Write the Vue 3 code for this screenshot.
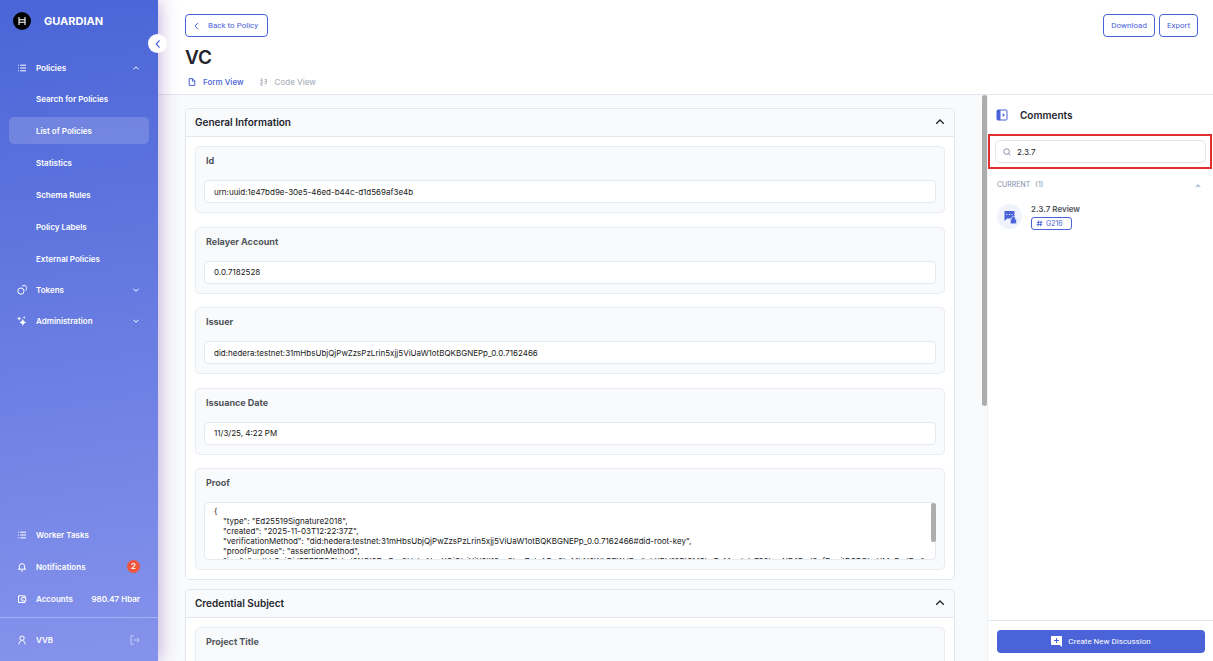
<script setup>
import { ref } from 'vue'

const policyItems = [
  'Search for Policies',
  'List of Policies',
  'Statistics',
  'Schema Rules',
  'Policy Labels',
  'External Policies',
]
const activeItem = ref('List of Policies')
const search = ref('2.3.7')

const fields = [
  { id: 'vc-id', label: 'Id', value: 'urn:uuid:1e47bd9e-30e5-46ed-b44c-d1d569af3e4b' },
  { id: 'vc-relayer', label: 'Relayer Account', value: '0.0.7182528' },
  { id: 'vc-issuer', label: 'Issuer', value: 'did:hedera:testnet:31mHbsUbjQjPwZzsPzLrin5xjj5ViUaW1otBQKBGNEPp_0.0.7162466' },
  { id: 'vc-date', label: 'Issuance Date', value: '11/3/25, 4:22 PM' },
]

const proof = `{
    "type": "Ed25519Signature2018",
    "created": "2025-11-03T12:22:37Z",
    "verificationMethod": "did:hedera:testnet:31mHbsUbjQjPwZzsPzLrin5xjj5ViUaW1otBQKBGNEPp_0.0.7162466#did-root-key",
    "proofPurpose": "assertionMethod",
    "jws": "eyJhbGciOiJFZERTQSIsImI2NCI6ZmFsc2UsImNyaXQiOlsiYjY0Il19..a2hmZnlnARw2brMbN2WkRPWdFndlgLXRkl12Pt0MSLeEvMa_Jgls782hexNF4RpJ2ofDuojtRCRQkgUMoRgJRw"
}`
</script>

<template>
  <div class="app">
    <aside class="sidebar">
      <div class="brand">
        <svg class="logo" viewBox="0 0 18 18" aria-hidden="true">
          <circle cx="9" cy="9" r="9" fill="#000" />
          <path d="M6 5v8M12 5v8M6 7.700h6M6 10.300h6" stroke="#fff" stroke-width="1.100" fill="none" />
        </svg>
        <span class="brand-name">GUARDIAN</span>
      </div>
      <button class="collapse" type="button" aria-label="Collapse menu">
        <svg viewBox="0 0 10 10"><path d="M6.300 2 3.500 5l2.800 3" /></svg>
      </button>

      <nav class="menu">
        <button class="row" type="button">
          <svg class="ico" viewBox="0 0 10 10"><path d="M3.200 2.200H9M3.200 5H9M3.200 7.800H9M1 2.200h.8M1 5h.8M1 7.800h.8" /></svg>
          <span class="grow">Policies</span>
          <svg class="chev" viewBox="0 0 8 8"><path d="M1.500 5.300 4 2.800l2.500 2.500" /></svg>
        </button>
        <ul class="submenu">
          <li v-for="item in policyItems" :key="item">
            <a href="#" class="sub" :class="{ active: item === activeItem }" @click.prevent="activeItem = item">{{ item }}</a>
          </li>
        </ul>
        <button class="row" type="button">
          <svg class="ico" viewBox="0 0 10 10"><circle cx="3.900" cy="6.100" r="3.100" /><path d="M5 1.400a2.700 2.700 0 1 1 3.400 4.100" /></svg>
          <span class="grow">Tokens</span>
          <svg class="chev" viewBox="0 0 8 8"><path d="M1.500 2.800 4 5.300l2.500-2.500" /></svg>
        </button>
        <button class="row" type="button">
          <svg class="ico solid" viewBox="0 0 10 10">
            <path d="M5.800 3 6.900 5.300 9.300 6.400 6.900 7.500 5.800 9.900 4.700 7.500 2.300 6.400 4.700 5.300Z" />
            <path d="M2.200.6 2.900 2 4.300 2.600 2.900 3.200 2.200 4.600 1.500 3.200.1 2.600 1.500 2Z" />
            <path d="M7.200.2 7.600 1.100 8.500 1.500 7.600 1.900 7.200 2.800 6.800 1.900 5.900 1.500 6.800 1.100Z" />
          </svg>
          <span class="grow">Administration</span>
          <svg class="chev" viewBox="0 0 8 8"><path d="M1.500 2.800 4 5.300l2.500-2.500" /></svg>
        </button>
      </nav>

      <div class="tools">
        <a href="#" class="row">
          <svg class="ico" viewBox="0 0 10 10"><path d="M3.200 2.200H9M3.200 5H9M3.200 7.800H9M1 2.200h.8M1 5h.8M1 7.800h.8" /></svg>
          <span class="grow">Worker Tasks</span>
        </a>
        <a href="#" class="row">
          <svg class="ico" viewBox="0 0 10 10"><path d="M2.400 7V4.200a2.600 2.600 0 0 1 5.200 0V7M1 7.200h8M4 9h2" /></svg>
          <span class="grow">Notifications</span>
          <span class="count">2</span>
        </a>
        <a href="#" class="row">
          <svg class="ico" viewBox="0 0 10 10"><path d="M8 3.200V1.800H1.500v6.700H8V7.200M8.700 3.400H6a1.800 1.800 0 0 0 0 3.600h2.700ZM6.200 4.900v.6" /></svg>
          <span class="grow">Accounts</span>
          <span>980.47 Hbar</span>
        </a>
      </div>
      <div class="user">
        <div class="row">
          <svg class="ico" viewBox="0 0 10 10"><circle cx="5" cy="3.200" r="2.200" /><path d="M1.800 9.500V8.400L3.800 5.400M8.200 9.500V8.400L6.200 5.400" /></svg>
          <span class="grow">VVB</span>
          <button class="logout" type="button" aria-label="Log out">
            <svg viewBox="0 0 10 10"><path d="M3.700.8H1v8.400h2.700M3.500 5h5.700M7 2.800 9.200 5 7 7.200" /></svg>
          </button>
        </div>
      </div>
    </aside>

    <div class="page">
      <header class="head">
        <div class="bar">
          <button class="btn back" type="button">
            <svg viewBox="0 0 8 8"><path d="M5 .8 2 4l3 3.200" /></svg>
            Back to Policy
          </button>
          <div class="actions">
            <button class="btn" type="button">Download</button>
            <button class="btn" type="button">Export</button>
          </div>
        </div>
        <h1>VC</h1>
        <div class="tabs" role="tablist">
          <button class="tab on" type="button" role="tab" aria-selected="true">
            <svg viewBox="0 0 8 8"><path d="M1.200.6h3.300l2.300 2.300v4.500H1.200ZM4.400.7v2.400h2.400" /></svg>
            Form View
          </button>
          <button class="tab" type="button" role="tab" aria-selected="false">
            <svg viewBox="0 0 8 8"><path d="M.8.600h1v1.800M.6 2.500h2.200M.6 4h1.800v1.200H.8v1.900h1.900M4.600 1.500h1.800v3.900H4.600M4.600 3.500h1.800" /></svg>
            Code View
          </button>
        </div>
      </header>

      <div class="body">
        <main class="content">
          <section class="card">
            <header class="card-head">
              <h2>General Information</h2>
              <button class="fold" type="button" aria-label="Collapse General Information">
                <svg viewBox="0 0 10 10"><path d="M1.200 6.800 5 3l3.800 3.800" /></svg>
              </button>
            </header>
            <div class="card-body general">
              <div v-for="f in fields" :key="f.id" class="field">
                <label :for="f.id">{{ f.label }}</label>
                <input :id="f.id" type="text" readonly :value="f.value" />
              </div>
              <div class="field">
                <label for="vc-proof">Proof</label>
                <div class="area">
                  <textarea id="vc-proof" readonly :value="proof"></textarea>
                  <span class="area-thumb"></span>
                </div>
              </div>
            </div>
          </section>
          <section class="card">
            <header class="card-head">
              <h2>Credential Subject</h2>
              <button class="fold" type="button" aria-label="Collapse Credential Subject">
                <svg viewBox="0 0 10 10"><path d="M1.200 6.800 5 3l3.800 3.800" /></svg>
              </button>
            </header>
            <div class="card-body">
              <div class="field">
                <label for="vc-title">Project Title</label>
                <input id="vc-title" type="text" readonly />
              </div>
            </div>
          </section>
        </main>
        <div class="track"><span class="thumb"></span></div>

        <aside class="panel">
          <div class="panel-head">
            <button class="toggle" type="button" aria-label="Hide comments">
              <svg viewBox="0 0 12 12">
                <rect x="1" y="1" width="10" height="10" rx="1" fill="#fff" stroke="#4a63d8" />
                <path d="M1 1h3.500v10H1Z" fill="#4a63d8" />
                <path d="M6.700 4v4l2.200-2Z" fill="#4a63d8" />
              </svg>
            </button>
            <h2>Comments</h2>
          </div>
          <div class="search">
            <label class="search-box">
              <svg viewBox="0 0 8 8"><circle cx="3.600" cy="3.600" r="2.800" /><path d="M5.600 5.600 7.400 7.400" /></svg>
              <input v-model="search" type="text" aria-label="Search comments" />
            </label>
          </div>
          <div class="group">
            <button class="group-head" type="button">
              <span>CURRENT</span><span class="num">(1)</span>
              <svg viewBox="0 0 6 3"><path d="M0 3 3 0l3 3Z" /></svg>
            </button>
            <a href="#" class="thread">
              <span class="avatar">
                <svg viewBox="0 0 14 14">
                  <path d="M1.500 1h10v7.500H4L1.500 11Z" fill="#4a63d8" />
                  <path d="M3.500 4.500h1M6 4.500h1M8.500 4.500h1" stroke="#fff" stroke-width="1" />
                  <path d="M8.500 9.200V8.300a1.900 1.900 0 0 1 3.800 0v.9h1.100v4.600H7.400V9.200Z" fill="#4a63d8" stroke="#f0f3fc" stroke-width=".6" />
                </svg>
              </span>
              <span class="thread-text">
                <strong>2.3.7 Review</strong>
                <span class="tag">
                  <svg viewBox="0 0 8 8"><path d="M3 .8 2.200 7.200M5.900.8 5.100 7.200M1 2.700h6.300M.7 5.200H7" /></svg>
                  G216
                </span>
              </span>
            </a>
          </div>
          <footer class="panel-foot">
            <button class="create" type="button">
              <svg viewBox="0 0 11 11">
                <path d="M0 .8A.8.8 0 0 1 .8 0h9.400a.8.8 0 0 1 .8.800V11L8.800 9H.8A.8.8 0 0 1 0 8.200Z" fill="#fff" />
                <path d="M5.500 2v5M3 4.500h5" stroke="#4a63d8" stroke-width="1" />
              </svg>
              Create New Discussion
            </button>
          </footer>
        </aside>
      </div>
    </div>
  </div>
</template>

<style>
body {
  margin: 0;
}
</style>

<style scoped>
* {
  box-sizing: border-box;
}
.app {
  display: flex;
  height: 100vh;
  overflow: hidden;
  font: 8px/12px Inter, "Liberation Sans", sans-serif;
  color: #181818;
  background: #fff;
}
button,
input,
textarea {
  font: inherit;
  color: inherit;
  margin: 0;
  padding: 0;
  border: 0;
  background: none;
}
button {
  cursor: pointer;
}
a {
  color: inherit;
  text-decoration: none;
}
svg {
  display: block;
  flex: none;
  fill: none;
  stroke: currentColor;
  stroke-width: 1;
}
h1,
h2 {
  margin: 0;
  font-weight: 600;
}

/* Sidebar */
.sidebar {
  position: relative;
  z-index: 2;
  flex: none;
  width: 158px;
  display: flex;
  flex-direction: column;
  color: #fff;
  font-weight: 600;
  background: linear-gradient(172deg, #4a65d7 0%, #8693ec 100%);
  box-shadow: 0 0 18px rgba(90, 38, 160, 0.42);
}
.brand {
  display: flex;
  align-items: center;
  gap: 13px;
  height: 42px;
  padding-left: 13px;
}
.logo {
  width: 18px;
  height: 18px;
  stroke: none;
}
.brand-name {
  font-size: 11px;
  font-weight: 700;
}
.collapse {
  position: absolute;
  top: 34px;
  right: -9px;
  width: 19px;
  height: 19px;
  display: grid;
  place-items: center;
  border-radius: 50%;
  background: #fff;
  color: #4a63d8;
}
.collapse svg {
  width: 12px;
  height: 12px;
}
.menu {
  display: flex;
  flex-direction: column;
  gap: 4px;
  padding: 12px 9px 0;
}
.row {
  display: flex;
  align-items: center;
  width: 100%;
  height: 27px;
  padding: 0 9px 0 8px;
  text-align: left;
}
.ico {
  width: 10px;
  height: 10px;
  margin-right: 9px;
}
.ico.solid {
  fill: currentColor;
  stroke: none;
}
.grow {
  flex: 1;
}
.chev {
  width: 8px;
  height: 8px;
}
.submenu {
  display: flex;
  flex-direction: column;
  gap: 5px;
  margin: 0;
  padding: 0;
  list-style: none;
}
.sub {
  display: flex;
  align-items: center;
  height: 27px;
  padding-left: 27px;
  border-radius: 5px;
}
.sub.active {
  background: rgba(255, 255, 255, 0.16);
}
.tools {
  display: flex;
  flex-direction: column;
  gap: 5px;
  margin-top: auto;
  padding: 0 9px 5px;
}
.count {
  width: 13px;
  height: 13px;
  border-radius: 50%;
  background: #f0563d;
  line-height: 13px;
  text-align: center;
}
.user {
  padding: 8px 9px;
  border-top: 1px solid #a3b2f5;
}
.logout {
  color: #c3cbf6;
}
.logout svg {
  width: 10px;
  height: 10px;
}

/* Page header */
.page {
  flex: 1;
  min-width: 0;
  display: flex;
  flex-direction: column;
}
.head {
  padding: 14px 15px 0 27px;
  border-bottom: 1px solid #e1e7ef;
}
.bar,
.actions {
  display: flex;
  justify-content: space-between;
  gap: 4px;
}
.btn,
.create {
  font-family: Roboto, Inter, sans-serif;
}
.btn {
  display: flex;
  align-items: center;
  height: 23px;
  padding: 0 7px;
  border: 1px solid #4a63d8;
  border-radius: 4px;
  color: #4a63d8;
}
.back {
  gap: 7px;
  padding-right: 9px;
}
.back svg {
  width: 8px;
  height: 8px;
}
h1 {
  margin-top: 8px;
  font-size: 19px;
  line-height: 26px;
  color: #23252e;
}
.tabs {
  display: flex;
  gap: 16px;
  padding: 1px 3px 2px;
}
.tab {
  display: flex;
  align-items: center;
  gap: 7px;
  height: 20px;
  font-weight: 500;
  color: #adb3bd;
}
.tab.on {
  color: #4a63d8;
}
.tab svg {
  width: 8px;
  height: 8px;
}

/* Document form */
.body {
  flex: 1;
  min-height: 0;
  display: flex;
  background: #f9fafc;
}
.content {
  flex: 1;
  min-width: 0;
  overflow: hidden;
  display: flex;
  flex-direction: column;
  gap: 9px;
  padding: 13px 27px 0;
}
.card {
  flex: none;
  border: 1px solid #e1e7ef;
  border-radius: 5px;
  background: #fff;
}
.card-head {
  display: flex;
  align-items: center;
  justify-content: space-between;
  height: 28px;
  padding: 0 9px 1px;
  border-bottom: 1px solid #e1e7ef;
  border-radius: 5px 5px 0 0;
  background: #f9fafc;
}
h2 {
  font-size: 10px;
  line-height: 14px;
  color: #23252e;
}
.fold svg {
  width: 10px;
  height: 10px;
  stroke: #23252e;
  stroke-width: 1.300;
}
.card-body {
  display: flex;
  flex-direction: column;
  justify-content: space-between;
  gap: 13px;
  padding: 9px;
}
.card-body.general {
  min-height: 442px;
}
.field {
  padding: 8px 8px 9px;
  border: 1px solid #e8ecf3;
  border-radius: 5px;
  background: #f9fafc;
}
.field label {
  display: block;
  margin-bottom: 13px;
  padding-left: 2px;
  font-size: 9px;
  line-height: 12px;
  font-weight: 700;
  color: #50545b;
}
.field input,
.field textarea {
  display: block;
  width: 100%;
  padding: 0 9px;
  border: 1px solid #e5eaf1;
  border-radius: 4px;
  background: #fff;
  outline: none;
}
.field input {
  height: 23px;
}
.area {
  position: relative;
}
.field textarea {
  height: 58px;
  padding: 3px 9px 0;
  line-height: 10px;
  white-space: pre;
  overflow: hidden;
  resize: none;
}
.area-thumb {
  position: absolute;
  top: 1px;
  right: 0;
  width: 5px;
  height: 39px;
  border-radius: 2px;
  background: #adadad;
}
.track {
  flex: none;
  width: 5px;
}
.thumb {
  display: block;
  height: 55%;
  border-radius: 3px;
  background: #adadad;
}

/* Comments */
.panel {
  flex: none;
  width: 226px;
  display: flex;
  flex-direction: column;
  border-left: 1px solid #eef1f6;
  background: #fff;
}
.panel-head {
  display: flex;
  align-items: center;
  gap: 12px;
  height: 39px;
  padding-left: 8px;
}
.toggle svg {
  width: 12px;
  height: 12px;
  stroke: none;
}
.search {
  margin-right: 1px;
  padding: 4px;
  padding-left: 5px;
  border: 2px solid #e02f2f;
}
.search-box {
  display: flex;
  align-items: center;
  gap: 6px;
  height: 23px;
  padding: 0 7px;
  border: 1px solid #e1e7ef;
  border-radius: 5px;
}
.search-box svg {
  width: 8px;
  height: 8px;
  color: #848fa9;
}
.search-box input {
  flex: 1;
  min-width: 0;
  outline: none;
}
.group {
  flex: 1;
  padding: 10px 8px 10px 9px;
}
.group-head {
  display: flex;
  align-items: center;
  gap: 5px;
  width: 100%;
  padding-right: 4px;
  font-size: 7px;
  color: #848fa9;
}
.group-head svg {
  width: 6px;
  height: 3px;
  margin-left: auto;
  fill: #b9c4de;
  stroke: none;
}
.thread {
  display: flex;
  align-items: center;
  gap: 9px;
  margin-top: 12px;
}
.avatar {
  display: grid;
  place-items: center;
  width: 25px;
  height: 25px;
  border-radius: 50%;
  background: #f0f3fc;
}
.avatar svg {
  width: 14px;
  height: 14px;
  stroke: none;
}
.thread-text {
  display: flex;
  flex-direction: column;
  align-items: flex-start;
  gap: 2px;
}
.thread-text strong {
  font-weight: 600;
  color: #50545b;
}
.tag {
  display: flex;
  align-items: center;
  gap: 3px;
  height: 13px;
  padding: 0 8px 0 4px;
  border: 1px solid #4a63d8;
  border-radius: 3px;
  font-size: 7px;
  color: #4a63d8;
}
.tag svg {
  width: 7px;
  height: 7px;
}
.panel-foot {
  padding: 9px 8px 8px 9px;
  border-top: 1px solid #e1e7ef;
}
.create {
  display: flex;
  align-items: center;
  justify-content: center;
  gap: 6px;
  width: 100%;
  height: 23px;
  border-radius: 4px;
  background: #4a63d8;
  color: #fff;
}
.create svg {
  width: 11px;
  height: 11px;
  stroke: none;
}
</style>
